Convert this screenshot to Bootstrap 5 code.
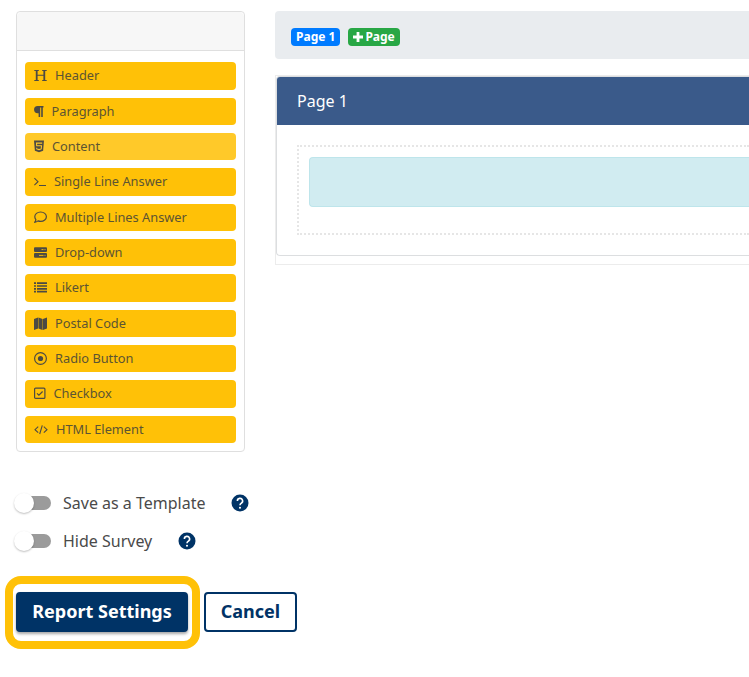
<!DOCTYPE html>
<html lang="en">
<head>
<meta charset="utf-8">
<meta name="viewport" content="width=device-width, initial-scale=1">
<title>Survey Designer</title>
<link href="https://cdn.jsdelivr.net/npm/bootstrap@5.3.0/dist/css/bootstrap.min.css" rel="stylesheet">
<style>
body{font-family:"Noto Sans","Open Sans",sans-serif;color:#4a4a4a}
.designer{padding:11px 0 0 16px;gap:30px}
.palette{width:229px;height:441px;border-color:#dfdfdf;border-radius:4px}
.palette .card-header{height:39px;background:#f7f7f7;border-color:#dfdfdf}
.palette .card-body{padding:11.2px 8px 0;gap:8px}
.tool{--bs-btn-bg:#ffc107;--bs-btn-color:#495057;--bs-btn-hover-bg:#ffca2c;height:27.35px;flex:none;font-size:12.8px;line-height:19px;padding:0 9px;border:0;border-radius:4px;gap:8px}
.tool.lit{--bs-btn-bg:#ffc929}
.tool svg{flex:none;display:block;color:#4c4a44}
.tool span{color:#5c5433}
.pages{height:48px;background:#e9ecef;border-radius:4px 0 0 4px;padding:17px 16px;gap:8px}
.page-tag{height:18px;font-size:12px;line-height:18px;padding:0 5px;border-radius:4px;font-weight:700}
.tag-green svg{margin-right:2px}
.tag-blue{background:#007bff}
.tag-green{background:#28a745}
.canvas-wrap{margin-top:16px;height:190px;border:1px solid #ececec;border-right:0}
.page-card{height:180px;border-color:#dcdee0;border-right:0;border-radius:4px 0 0 4px}
.page-card .card-header{height:48px;background:#3a5a8a;border:0;padding:0 20px;font-size:16px;border-radius:3px 0 0 0}
.drop-zone{margin:20px 0 20px 20px;height:90px;border:2px dotted #e6e6e6;border-right:0;padding:10px 0 10px 10px}
.drop-zone .alert{height:50px;background:#d1ecf1;border-color:#bee5eb;border-right:0;border-radius:4px 0 0 4px}
.options{margin-top:32px;padding-left:15px}
.option-row{height:38px;font-size:16px}
.toggle{width:36px;height:14px;border-radius:7px;background:#9b9b9b;margin-right:12px}
.toggle i{display:block;width:20px;height:20px;border-radius:50%;background:#fff;margin:-3px 0 0 -1px;box-shadow:0 1px 2px rgba(0,0,0,.25)}
.help{margin-left:24.5px}
.actions{padding-left:5px;margin-top:16px;gap:4px}
.highlight{width:195px;height:73px;border:8px solid #ffc107;border-radius:16px;padding:8px 3px}
.action{--bs-btn-color:#036;height:40px;border:2px solid #036;border-radius:4px;font-size:18px;font-weight:700;line-height:24px;padding:5px 0 7px}
.report{--bs-btn-bg:#036;--bs-btn-color:#fff;width:172px;box-shadow:0 2px 3px rgba(0,0,0,.35)}
.cancel{width:93px}
</style>
</head>
<body>
<main>
<div class="designer d-flex align-items-start">
  <aside class="palette card flex-shrink-0">
    <div class="card-header"></div>
    <div class="card-body d-flex flex-column">
      <button class="tool btn d-flex align-items-center"><svg width="13" height="13" viewBox="0 0 13 13" fill="currentColor"><path d="M.3 1h4.500v1H3.600v3.800h5.800V2H8.200V1h4.500v1h-1.500v9h1.500v1H8.200v-1h1.200V6.800H3.600V11h1.200v1H.3v-1h1.500V2H.3z"/></svg><span>Header</span></button>
      <button class="tool btn d-flex align-items-center"><svg width="9.500" height="13" viewBox="0 0 9.500 13" fill="currentColor"><path d="M3.700.9h5.800v1.500H8.800V12H7.200V2.400H6.200V12H4.600V8.200h-.9a3.650 3.650 0 0 1 0-7.300z"/></svg><span>Paragraph</span></button>
      <button class="tool lit btn d-flex align-items-center"><svg width="10" height="13" viewBox="0 0 10 13"><path fill="currentColor" d="M0 .5h10l-.9 10.300L5 12.200.9 10.800z"/><path d="M8.200 3.100H2.500l.2 2.700h4.800L7.200 8.900 5 9.600 2.800 8.900l-.1-1.200" fill="none" stroke="#ffc929" stroke-width="1.050"/></svg><span>Content</span></button>
      <button class="tool btn d-flex align-items-center"><svg width="12" height="13" viewBox="0 0 12 13" fill="none" stroke="currentColor" stroke-width="1.100"><path d="M.4 3.200 4 6.700.4 10.200M5 10.500h7"/></svg><span>Single Line Answer</span></button>
      <button class="tool btn d-flex align-items-center"><svg width="13" height="13" viewBox="0 0 13 13" fill="none" stroke="currentColor" stroke-width="1.200" stroke-linejoin="round"><path d="M6.600 1c3.300 0 5.800 2.100 5.800 4.700s-2.500 4.700-5.800 4.700c-.9 0-1.800-.2-2.600-.5-1 .8-2.100 1.300-3.400 1.400.7-.8 1.200-1.600 1.300-2.700C1.200 7.800.8 6.800.8 5.700.8 3.100 3.300 1 6.600 1z"/></svg><span>Multiple Lines Answer</span></button>
      <button class="tool btn d-flex align-items-center"><svg width="13" height="13" viewBox="0 0 13 13" fill="currentColor"><rect y="1.300" width="13" height="4.600" rx="1"/><rect y="7.100" width="13" height="4.600" rx="1"/><path d="M7.500 3.600h2M10.500 3.600h1M5 9.400h4.500M10.500 9.400h1" stroke="#ffc107" stroke-width=".9"/></svg><span>Drop-down</span></button>
      <button class="tool btn d-flex align-items-center"><svg width="13" height="13" viewBox="0 0 13 13" fill="none" stroke="currentColor" stroke-width="1.700"><path d="M0 2.200h2M3 2.200h10M0 5h2M3 5h10M0 7.800h2M3 7.800h10M0 10.600h2M3 10.600h10"/></svg><span>Likert</span></button>
      <button class="tool btn d-flex align-items-center"><svg width="13" height="13" viewBox="0 0 13 13" fill="currentColor"><path d="M0 2.100 4.100.4v11L0 13zM4.500.4 8.500 2v11l-4-1.600zM8.900 2 13 .4v11L8.900 13z"/></svg><span>Postal Code</span></button>
      <button class="tool btn d-flex align-items-center"><svg width="13" height="13" viewBox="0 0 13 13"><circle cx="6.500" cy="6.500" r="5.900" fill="none" stroke="currentColor" stroke-width="1.200"/><circle cx="6.500" cy="6.500" r="2.600" fill="currentColor"/></svg><span>Radio Button</span></button>
      <button class="tool btn d-flex align-items-center"><svg width="11.500" height="13" viewBox="0 0 11.500 13" fill="none" stroke="currentColor" stroke-width="1.200"><rect x=".6" y="1.100" width="10.300" height="10.300" rx="1"/><path d="m3 6.300 1.900 1.900 3.700-3.700"/></svg><span>Checkbox</span></button>
      <button class="tool btn d-flex align-items-center"><svg width="14" height="13" viewBox="0 0 14 13" fill="none" stroke="currentColor" stroke-width="1.100"><path d="M4.200 3.700 1 6.700l3.200 3M9.800 3.700l3.200 3-3.200 3M8.300 2.300 5.700 11"/></svg><span>HTML Element</span></button>
    </div>
  </aside>
  <section class="flex-grow-1">
    <nav class="pages d-flex">
      <span class="page-tag tag-blue text-white">Page 1</span>
      <span class="page-tag tag-green text-white d-flex align-items-center"><svg width="10" height="10" viewBox="0 0 10 10" stroke="#fff" stroke-width="2.800"><path d="M5 0v10M0 5h10"/></svg>Page</span>
    </nav>
    <div class="canvas-wrap">
      <div class="page-card card">
        <div class="card-header text-white d-flex align-items-center">Page 1</div>
        <div class="drop-zone"><div class="alert m-0"></div></div>
      </div>
    </div>
  </section>
</div>
<div class="options">
  <div class="option-row d-flex align-items-center">
    <span class="toggle"><i></i></span><span>Save as a Template</span>
    <svg class="help" width="20" height="20" viewBox="0 0 20 20"><circle cx="10" cy="10" r="8.500" fill="#036"/><path d="M7.400 8a2.600 2.600 0 1 1 3.900 2.200c-.9.600-1.300 1-1.300 2" fill="none" stroke="#fff" stroke-width="1.600"/><circle cx="10" cy="14.700" r="1.050" fill="#fff"/></svg>
  </div>
  <div class="option-row d-flex align-items-center">
    <span class="toggle"><i></i></span><span>Hide Survey</span>
    <svg class="help" width="20" height="20" viewBox="0 0 20 20"><circle cx="10" cy="10" r="8.500" fill="#036"/><path d="M7.400 8a2.600 2.600 0 1 1 3.900 2.200c-.9.600-1.300 1-1.300 2" fill="none" stroke="#fff" stroke-width="1.600"/><circle cx="10" cy="14.700" r="1.050" fill="#fff"/></svg>
  </div>
</div>
<div class="actions d-flex align-items-start">
  <div class="highlight"><button class="btn action report">Report Settings</button></div>
  <button class="btn action cancel mt-3">Cancel</button>
</div>
</main>
<script src="https://cdn.jsdelivr.net/npm/bootstrap@5.3.0/dist/js/bootstrap.bundle.min.js"></script>
</body>
</html>
